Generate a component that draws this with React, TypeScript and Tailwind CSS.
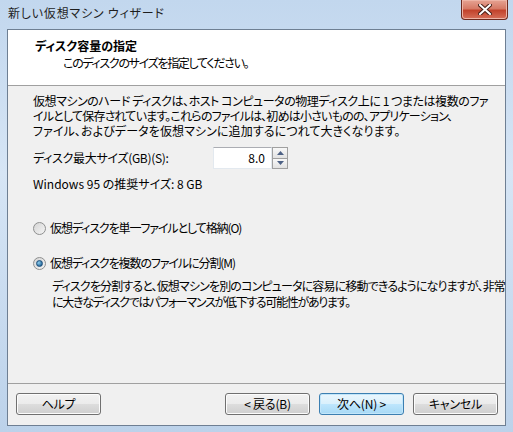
import React from 'react';

const jp = "font-['Meiryo_UI','Noto_Sans_CJK_JP',sans-serif] [font-feature-settings:'palt']";

function WinButton({ label, primary }: { label: string; primary?: boolean }) {
  return (
    <button
      className={
        'h-[22px] w-[85px] rounded-[3px] border text-[12px] text-black leading-none tracking-[-0.2px] ' +
        (primary
          ? 'border-[#3c7fb1] bg-[linear-gradient(#eaf6fd_0%,#d9f0fc_50%,#bee6fd_50%,#a7d9f5_100%)] shadow-[inset_0_0_0_1px_#c2e6fa]'
          : 'border-[#707070] bg-[linear-gradient(#f2f2f2_0%,#ebebeb_50%,#dddddd_50%,#cfcfcf_100%)] shadow-[inset_0_0_0_1px_#fcfcfc]')
      }
    >
      {label}
    </button>
  );
}

function Radio({ checked }: { checked?: boolean }) {
  return (
    <span className="relative inline-flex h-[13px] w-[13px] items-center justify-center rounded-full border border-[#8e8f8f] bg-[linear-gradient(135deg,#d5d5d5,#f4f4f4)]">
      {checked && (
        <span className="h-[7px] w-[7px] rounded-full border border-[#1c4f7c] bg-[radial-gradient(circle_at_35%_35%,#8ecff0,#2d6e9e_70%,#174a73)]" />
      )}
    </span>
  );
}

export default function App() {
  return (
    <div className={`${jp} flex h-[432px] w-[513px] flex-col bg-[linear-gradient(180deg,#c2d7ee_0%,#d6e5f5_40%,#bcd2ea_100%)] text-[12px] text-black`}>
      {/* title bar */}
      <div className="flex h-[29px] shrink-0 items-start justify-between">
        <span className="pl-[8px] pt-[6px] text-[12px] leading-[14px] tracking-[0.8px] text-[#1e1e1e]">新しい仮想マシン ウィザード</span>
        <div className="mr-[5px] flex h-[20px] w-[47px] items-center justify-center rounded-b-[4px] border border-t-0 border-[#6d2a1f] bg-[linear-gradient(#e6a393_0%,#d67a66_45%,#c2432c_55%,#d7705a_100%)] shadow-[inset_0_0_0_1px_#eeb4a6]">
          <svg width="14" height="11" viewBox="0 0 14 11">
            <path d="M2 1 L12 10 M12 1 L2 10" stroke="#4a2018" strokeWidth="4" strokeLinecap="square" />
            <path d="M2 1 L12 10 M12 1 L2 10" stroke="#ffffff" strokeWidth="2" strokeLinecap="square" />
          </svg>
        </div>
      </div>

      {/* client area */}
      <div className="mx-[7px] mb-[6px] flex flex-1 flex-col border border-[#6e7f93] bg-[#f0f0f0]">
        <div className="h-[56px] shrink-0 border-b border-[#a0a0a0] bg-white">
          <div className="pl-[27px] pt-[8px] text-[12px] font-bold leading-[16px]">ディスク容量の指定</div>
          <div className="pl-[55px] pt-[1px] text-[12px] leading-[16px] tracking-[-1.3px]">このディスクのサイズを指定してください。</div>
        </div>

        <div className="flex flex-1 flex-col pl-[25px] pt-[7px]">
          <div className="leading-[15px]">
            <div className="whitespace-nowrap tracking-[-0.45px]">仮想マシンのハード ディスクは、ホスト コンピュータの物理ディスク上に 1 つまたは複数のファ</div>
            <div className="whitespace-nowrap tracking-[-0.8px]">イルとして保存されています。これらのファイルは、初めは小さいものの、アプリケーション、</div>
            <div className="whitespace-nowrap tracking-[0.1px]">ファイル、およびデータを仮想マシンに追加するにつれて大きくなります。</div>
          </div>

          <div className="mt-[9px] flex items-center">
            <span className="w-[180px] tracking-[-0.3px]">ディスク最大サイズ(GB)(S):</span>
            <div className="flex h-[22px]">
              <div className="flex w-[59px] items-center justify-end border border-[#e3e9ef] border-t-[#abadb3] bg-white pr-[6px]">8.0</div>
              <div className="flex w-[16px] flex-col border border-[#a0a0a0] bg-[#f0f0f0]">
                <div className="flex flex-1 items-center justify-center border-b border-[#a0a0a0] bg-[linear-gradient(#f8f8f8,#e2e2e2)]">
                  <svg width="7" height="4" viewBox="0 0 7 4"><path d="M0 4 L3.5 0 L7 4 Z" fill="#4d6185" /></svg>
                </div>
                <div className="flex flex-1 items-center justify-center bg-[linear-gradient(#f8f8f8,#e2e2e2)]">
                  <svg width="7" height="4" viewBox="0 0 7 4"><path d="M0 0 L3.5 4 L7 0 Z" fill="#4d6185" /></svg>
                </div>
              </div>
            </div>
          </div>

          <div className="mt-[7px] leading-[15px]">Windows 95 の推奨サイズ: 8 GB</div>

          <div className="mt-[28px] flex items-center gap-[4px]">
            <Radio />
            <span className="tracking-[-1.1px]">仮想ディスクを単一ファイルとして格納(O)</span>
          </div>

          <div className="mt-[17px] flex items-center gap-[4px]">
            <Radio checked />
            <span className="tracking-[-1.1px]">仮想ディスクを複数のファイルに分割(M)</span>
          </div>

          <div className="mt-[6px] pl-[19px] leading-[16px]">
            <div className="whitespace-nowrap tracking-[-0.85px]">ディスクを分割すると、仮想マシンを別のコンピュータに容易に移動できるようになりますが、非常</div>
            <div className="whitespace-nowrap tracking-[-1.3px]">に大きなディスクではパフォーマンスが低下する可能性があります。</div>
          </div>
        </div>

        <div className="h-px bg-[#a0a0a0]" />
        <div className="flex h-[41px] shrink-0 items-center pl-[8px] pr-[7px] pb-[1px]">
          <WinButton label="ヘルプ" />
          <div className="flex-1" />
          <div className="flex gap-[9px]">
            <WinButton label="< 戻る(B)" />
            <WinButton label="次へ(N) >" primary />
            <WinButton label="キャンセル" />
          </div>
        </div>
      </div>
    </div>
  );
}
